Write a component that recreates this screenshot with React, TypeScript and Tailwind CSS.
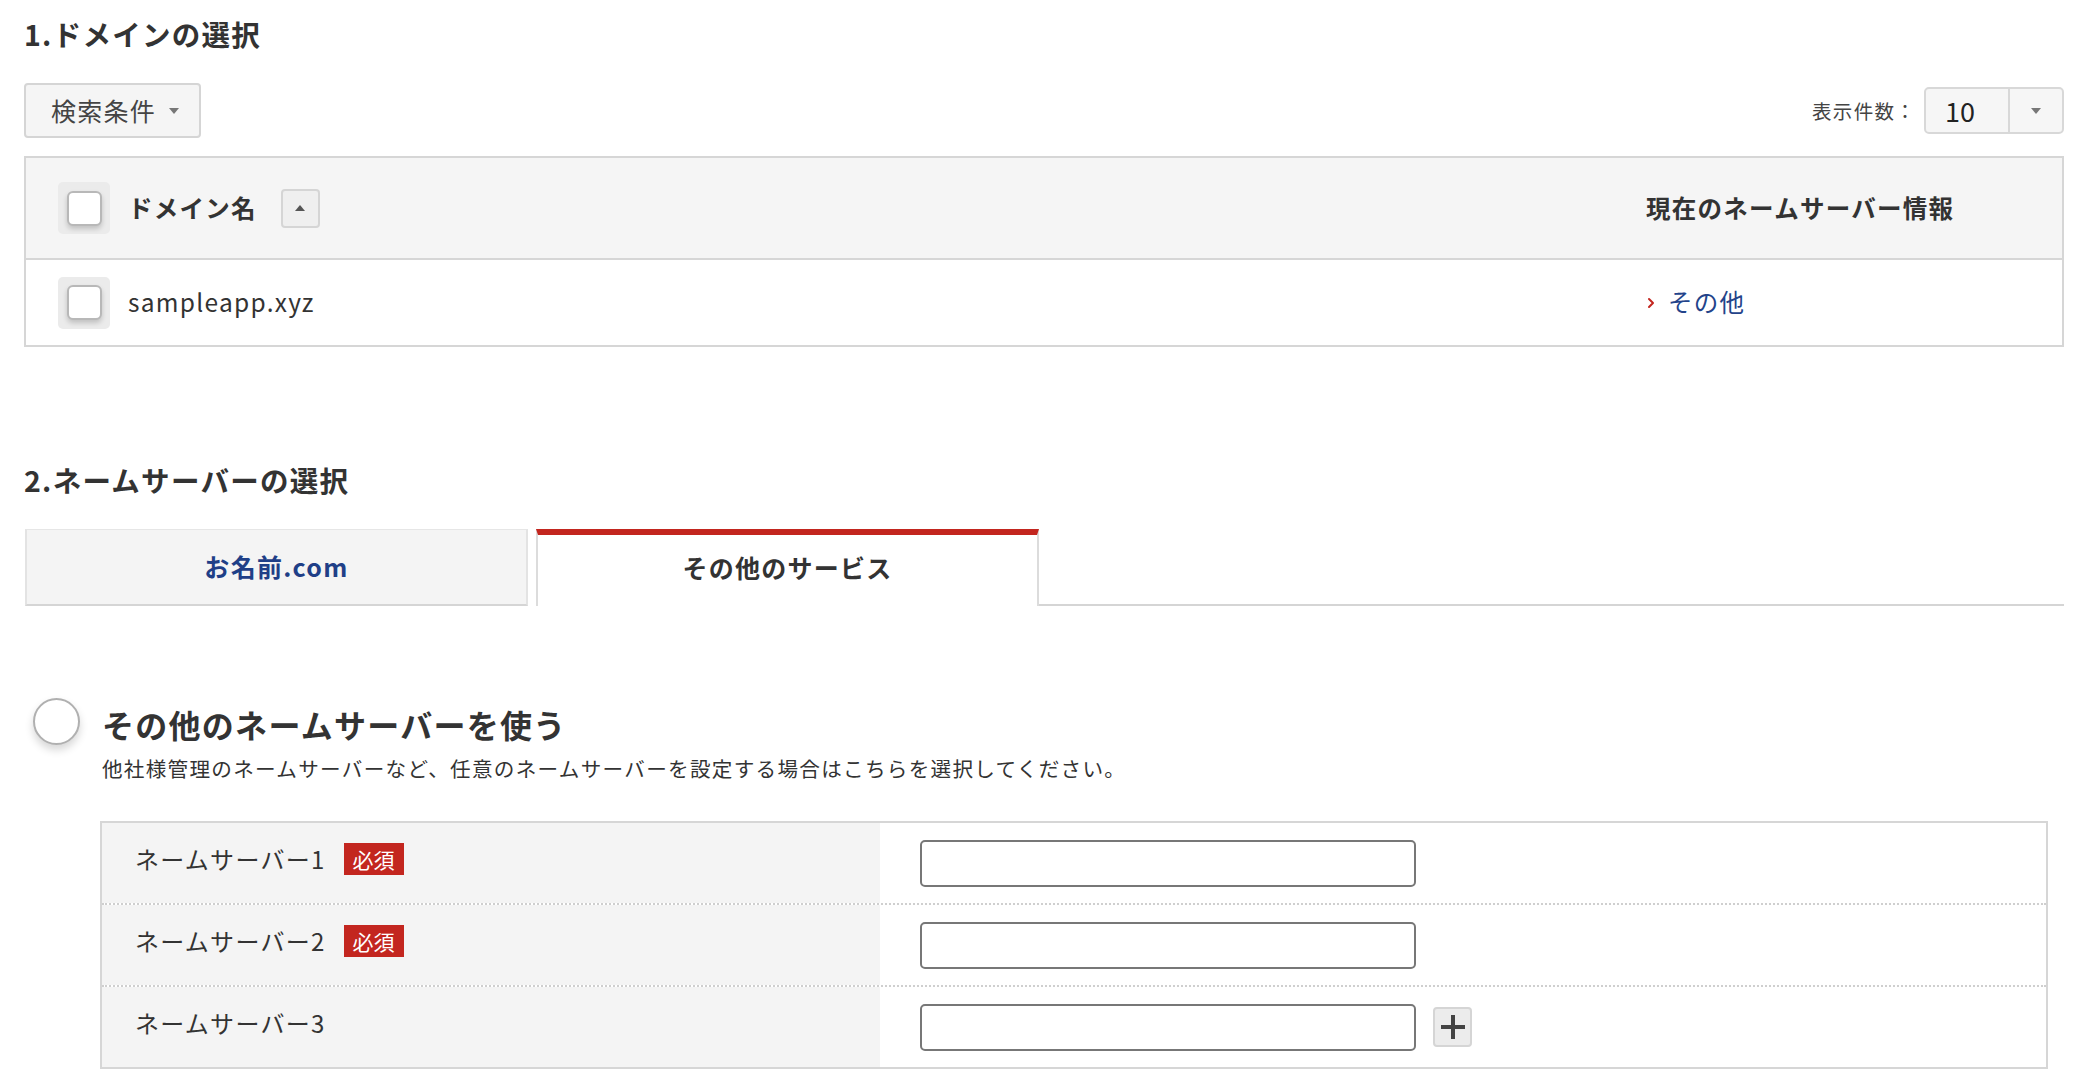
import { ChevronRight } from "lucide-react";

function Checkbox() {
  return (
    <span className="flex h-[52px] w-[52px] shrink-0 items-center justify-center rounded-[5px] bg-[#ebebeb]">
      <span className="h-[35px] w-[35px] rounded-[6px] border-2 border-[#b8b8b8] bg-white shadow-[0_3px_5px_rgba(0,0,0,0.18)]" />
    </span>
  );
}

function CaretDown() {
  return <span className="h-0 w-0 border-x-[5px] border-t-[6px] border-x-transparent border-t-[#777]" />;
}

function Required() {
  return (
    <span className="flex h-[32px] w-[60px] items-center justify-center bg-[#c3261f] text-[21px] leading-none tracking-normal text-white">
      必須
    </span>
  );
}

const servers = [
  { label: "ネームサーバー1", required: true },
  { label: "ネームサーバー2", required: true },
  { label: "ネームサーバー3", required: false },
];

export default function App() {
  return (
    <div className="min-h-screen bg-white pb-[24px] pl-[24px] pr-[34px] pt-[14px] font-['Noto_Sans_CJK_JP',sans-serif] tracking-[0.08em] text-[#333]">
      {/* 1. domain */}
      <h2 className="text-[28.5px] font-bold leading-[40px]">1.ドメインの選択</h2>

      <div className="mt-[29px] flex items-center justify-between">
        <button className="flex h-[55px] w-[177px] items-center gap-[13px] rounded-[4px] border-2 border-[#d5d5d5] bg-[#f5f5f5] pl-[25px] text-[25px] leading-none text-[#444]">
          検索条件
          <CaretDown />
        </button>
        <div className="flex items-center gap-[8px]">
          <span className="text-[19.5px] leading-none text-[#444]">表示件数：</span>
          <div className="flex h-[47px] w-[140px] rounded-[5px] border-2 border-[#d8d8d8] bg-[#f6f6f6]">
            <span className="flex w-[84px] items-center border-r-2 border-[#d8d8d8] pl-[19px] text-[27px] leading-none tracking-normal text-[#222]">
              10
            </span>
            <span className="flex flex-1 items-center justify-center">
              <CaretDown />
            </span>
          </div>
        </div>
      </div>

      <div className="mt-[18px] border-2 border-[#d6d6d6]">
        <div className="grid h-[102px] grid-cols-[1fr_416px] border-b-2 border-[#d6d6d6] bg-[#f5f5f5]">
          <div className="flex items-center pl-[32px]">
            <Checkbox />
            <span className="ml-[18px] text-[24.5px] font-bold leading-none">ドメイン名</span>
            <button className="ml-[24px] flex h-[39px] w-[39px] items-center justify-center rounded-[4px] border-2 border-[#d5d5d5] bg-[#efefef]">
              <span className="h-0 w-0 border-x-[5px] border-b-[6px] border-x-transparent border-b-[#555]" />
            </button>
          </div>
          <div className="flex items-center text-[24.5px] font-bold leading-none">現在のネームサーバー情報</div>
        </div>
        <div className="grid h-[85px] grid-cols-[1fr_416px]">
          <div className="flex items-center pl-[32px]">
            <Checkbox />
            <span className="ml-[18px] text-[24.5px] leading-none">sampleapp.xyz</span>
          </div>
          <div className="flex items-center">
            <ChevronRight size={16} strokeWidth={3} className="-ml-[3px] text-[#c3261f]" />
            <a className="ml-[9px] text-[24.5px] leading-none text-[#23438a]">その他</a>
          </div>
        </div>
      </div>

      {/* 2. name server */}
      <h2 className="mt-[113px] text-[28.5px] font-bold leading-[40px]">2.ネームサーバーの選択</h2>

      <div className="mt-[29px] flex">
        <div className="ml-[1px] flex h-[77px] w-[503px] items-center justify-center border-x-2 border-b-2 border-t border-x-[#e3e3e3] border-b-[#d5d5d5] border-t-[#e6e6e6] bg-[#f4f4f4] text-[25px] font-bold text-[#1f3f87]">
          お名前.com
        </div>
        <div className="ml-[8px] flex h-[77px] w-[503px] items-center justify-center border-x-2 border-t-[6px] border-x-[#dcdcdc] border-t-[#c3261f] bg-white pb-[6px] text-[25px] font-bold">
          その他のサービス
        </div>
        <div className="flex-1 self-end border-b-2 border-[#d5d5d5]" />
      </div>

      <div className="mt-[92px] flex items-start gap-[22px] pl-[9px]">
        <span className="h-[47px] w-[47px] shrink-0 rounded-full border-2 border-[#b0b0b0] bg-white shadow-[0_5px_8px_rgba(0,0,0,0.16)]" />
        <div className="pt-[6px]">
          <h3 className="text-[32px] font-bold leading-[40px]">その他のネームサーバーを使う</h3>
          <p className="mt-[10px] text-[20.6px] leading-[28px]">
            他社様管理のネームサーバーなど、任意のネームサーバーを設定する場合はこちらを選択してください。
          </p>
        </div>
      </div>

      <div className="ml-[76px] mr-[16px] mt-[39px] border-2 border-[#d6d6d6]">
        {servers.map((s, i) => (
          <div
            key={s.label}
            className={
              i < servers.length - 1
                ? "grid h-[82px] grid-cols-[778px_1fr] border-b-2 border-dotted border-[#cfcfcf]"
                : "grid h-[80px] grid-cols-[778px_1fr]"
            }
          >
            <div className="flex items-center gap-[18px] bg-[#f4f4f4] pb-[8px] pl-[33px]">
              <span className="text-[24px] leading-none">{s.label}</span>
              {s.required && <Required />}
            </div>
            <div className="flex items-center gap-[17px] pl-[40px]">
              <input className="h-[47px] w-[496px] rounded-[5px] border-2 border-[#777] bg-white" />
              {i === servers.length - 1 && (
                <button className="flex h-[40px] w-[39px] items-center justify-center rounded-[4px] border-2 border-[#d5d5d5] bg-[#ececec]">
                  <svg width="24" height="24" viewBox="0 0 24 24">
                    <rect x="0" y="10" width="24" height="4" fill="#444" />
                    <rect x="10" y="0" width="4" height="24" fill="#444" />
                  </svg>
                </button>
              )}
            </div>
          </div>
        ))}
      </div>
    </div>
  );
}
